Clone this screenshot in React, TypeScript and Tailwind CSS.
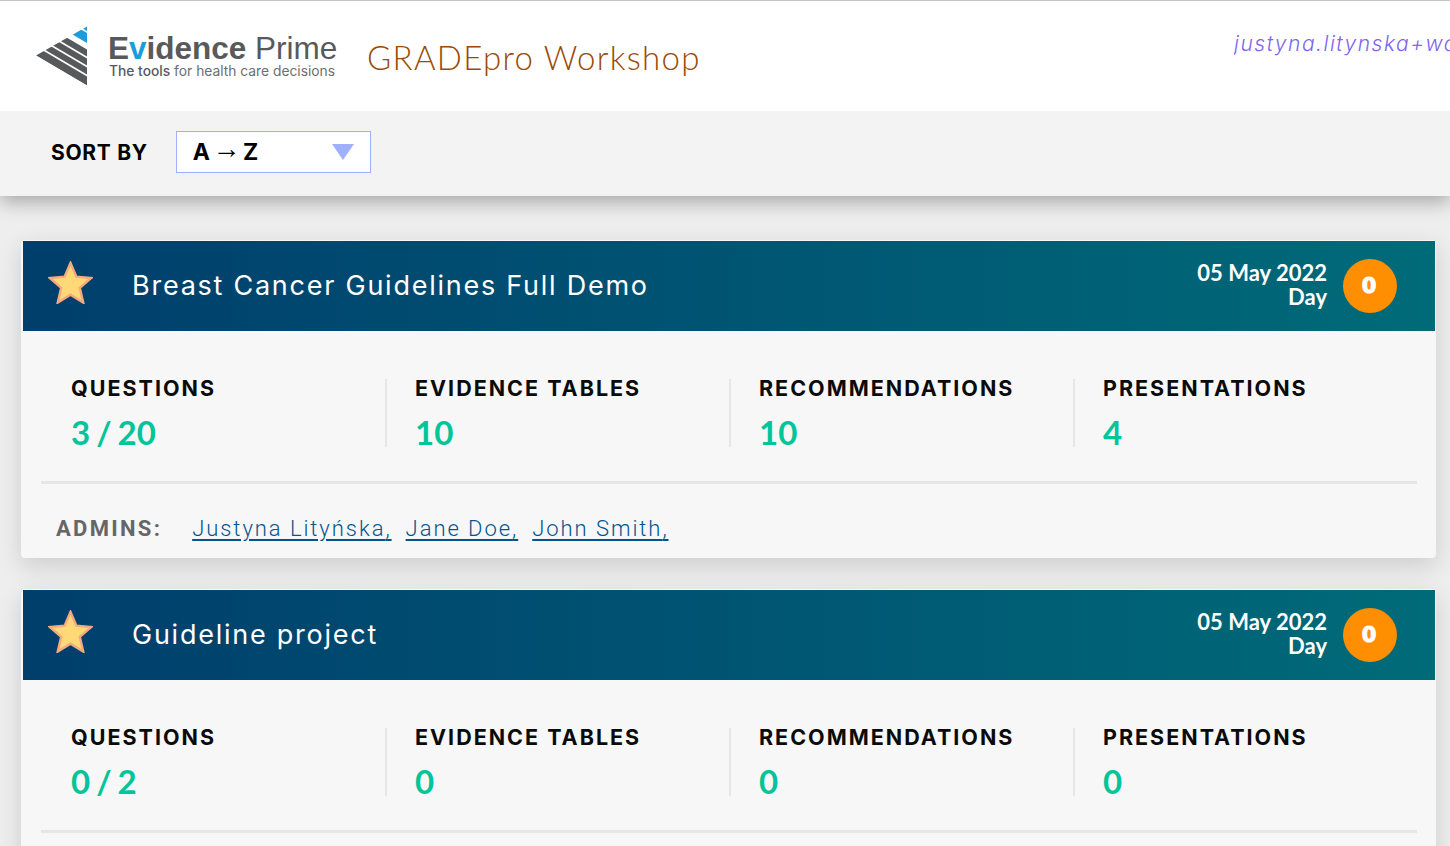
import React from 'react';

const heading = "font-['Inter',sans-serif]";
const lato = "font-['Lato',sans-serif]";

const Logo: React.FC = () => {
  const stripes = [
    { top: 76.5, bottom: 85.5, color: '#58595b' },
    { top: 67.5, bottom: 74.5, color: '#58595b' },
    { top: 58.5, bottom: 65.5, color: '#58595b' },
    { top: 49.5, bottom: 56.5, color: '#58595b' },
    { top: 33, bottom: 43, color: '#1b9cdc' },
    { top: 26, bottom: 31, color: '#1b9cdc' },
  ];
  const dy = 51 * (30 / 51);
  return (
    <svg width="52" height="60" viewBox="36 26 52 60" className="shrink-0">
      <defs>
        <clipPath id="logo-tri">
          <polygon points="36,55.5 87,26.5 87,85.5" />
        </clipPath>
      </defs>
      <g clipPath="url(#logo-tri)">
        {stripes.map((s, i) => (
          <polygon key={i} fill={s.color} points={`87,${s.top} 87,${s.bottom} 36,${s.bottom - dy} 36,${s.top - dy}`} />
        ))}
      </g>
    </svg>
  );
};

const Star: React.FC = () => (
  <svg width="45" height="43" viewBox="0 0 46 44" className="shrink-0">
    <polygon
      points="23,2 29,16 44,17.5 32.5,27.5 36,42.5 23,34.5 10,42.5 13.5,27.5 2,17.5 17,16"
      fill="#ffd976"
      stroke="#f5a97f"
      strokeWidth="2.5"
      strokeLinejoin="miter"
    />
  </svg>
);

type Stat = { label: string; value: string };

const StatCell: React.FC<Stat & { first?: boolean }> = ({ label, value, first }) => (
  <div className={first ? 'w-[344px] pl-[30px]' : 'w-[344px] pl-[28px] border-l-2 border-[#e6e6e6]'}>
    <div className={`${heading} -mt-[1px] text-[21.5px] leading-[20px] font-bold tracking-[2px] text-[#0b0b0b]`}>{label}</div>
    <div className={`${lato} text-[33px] leading-[28px] font-bold text-[#00c49a] mt-[20px] [word-spacing:-2px]`}>{value}</div>
  </div>
);

type Project = { title: string; stats: Stat[]; admins: string[] };

const projects: Project[] = [
  {
    title: 'Breast Cancer Guidelines Full Demo',
    stats: [
      { label: 'QUESTIONS', value: '3 / 20' },
      { label: 'EVIDENCE TABLES', value: '10' },
      { label: 'RECOMMENDATIONS', value: '10' },
      { label: 'PRESENTATIONS', value: '4' },
    ],
    admins: ['Justyna Lityńska', 'Jane Doe', 'John Smith'],
  },
  {
    title: 'Guideline project',
    stats: [
      { label: 'QUESTIONS', value: '0 / 2' },
      { label: 'EVIDENCE TABLES', value: '0' },
      { label: 'RECOMMENDATIONS', value: '0' },
      { label: 'PRESENTATIONS', value: '0' },
    ],
    admins: ['Justyna Lityńska'],
  },
];

const ProjectCard: React.FC<{ project: Project }> = ({ project }) => (
  <div className="w-[1415px] h-[318px] shrink-0 ml-[21px] bg-[#f7f7f7] rounded-[4px] pt-px shadow-[0_8px_24px_rgba(0,0,0,0.14)]">
    <div className="ml-[2px] mr-px h-[90px] flex items-center bg-gradient-to-r from-[#003e6c] to-[#006b78]">
      <div className="ml-[25px] -mt-[8px]"><Star /></div>
      <div className={`${heading} ml-[39px] text-[27px] font-normal tracking-[1.75px] text-white`}>{project.title}</div>
      <div className={`${lato} ml-auto -mt-[3px] text-right text-[22px] leading-[24px] font-bold text-white`}>
        <div>05 May 2022</div>
        <div>Day</div>
      </div>
      <div className="ml-[16px] mr-[38px] w-[54px] h-[54px] rounded-full bg-[#ff8f00] flex items-center justify-center pt-[2px] pr-[2px]">
        <span className="font-['DejaVu_Sans',sans-serif] text-[21px] font-bold text-white [-webkit-text-stroke:1px_white]">0</span>
      </div>
    </div>
    <div className="flex ml-[20px] mr-[19px] mt-[48px] h-[68px]">
      {project.stats.map((s, i) => (
        <StatCell key={s.label} {...s} first={i === 0} />
      ))}
    </div>
    <div className="ml-[20px] mr-[19px] mt-[34px] h-[3px] bg-[#e6e6e6]" />
    <div className="flex items-baseline ml-[35px] mt-[32px] text-[22px] leading-[26px] font-['Roboto',sans-serif]">
      <span className="font-bold tracking-[2.3px] text-[#666666]">ADMINS:</span>
      <div className="flex ml-[30px] gap-[14px]">
        {project.admins.map(a => (
          <a key={a} className="underline underline-offset-[3px] font-light tracking-[1.95px] text-[#03558f]">{a},</a>
        ))}
      </div>
    </div>
  </div>
);

const App: React.FC = () => (
  <div className="w-[1450px] h-[846px] overflow-hidden bg-[#eeeeee] flex flex-col">
    <header className="relative z-20 h-[111px] shrink-0 bg-white border-t border-[#c4c4c4] flex items-start">
      <div className="ml-[36px] mt-[25px]"><Logo /></div>
      <div className="ml-[20px] mt-[29px] w-[240px] font-['Liberation_Sans',sans-serif] text-[#58595b]">
        <div className="text-[31.5px] leading-[36px] whitespace-nowrap">
          <span className="font-bold">E</span><span className="font-bold text-[#1b9cdc]">v</span><span className="font-bold">idence</span> Prime
        </div>
        <div className="font-['Inter',sans-serif] text-[13.8px] leading-[16px] whitespace-nowrap -mt-[3px] ml-[1px] text-[#6d6e70]">
          <span className="font-medium text-[#58595b]">The tools</span> for health care decisions
        </div>
      </div>
      <div className={`${lato} ml-[19px] mt-[35px] text-[33px] leading-[42px] font-light tracking-[1.3px] text-[#9a4a06] whitespace-nowrap`}>
        GRADEpro Workshop
      </div>
      <div className={`${heading} ml-auto mt-[30px] w-[216px] overflow-hidden text-[21px] leading-[26px] italic font-light tracking-[1.5px] text-[#8064ee] whitespace-nowrap`}>
        justyna.litynska+workshop@evidenceprime.pl
      </div>
    </header>
    <div className="relative z-10 h-[85px] shrink-0 bg-[#f3f3f3] flex items-center pl-[51px] pb-[3px] shadow-[0_6px_18px_rgba(0,0,0,0.3)]">
      <span className={`${heading} mt-[2px] text-[21px] font-bold tracking-[0.7px] text-black`}>SORT BY</span>
      <div className="ml-[28px] w-[195px] h-[42px] bg-white border border-[#9fb0ff] flex items-center pl-[16px] pr-[16px]">
        <span className={`${heading} text-[23px] font-bold text-black [word-spacing:-3px]`}>
          A <span className="inline-block -translate-y-[2px] font-['Liberation_Sans',sans-serif] text-[28px] leading-none font-normal">→</span> Z
        </span>
        <svg width="22" height="16" viewBox="0 0 22 16" className="ml-auto">
          <polygon points="0,0 22,0 11,16" fill="#9fb0ff" />
        </svg>
      </div>
    </div>
    <main className="flex flex-col gap-[31px] pt-[44px]">
      {projects.map(p => (
        <ProjectCard key={p.title} project={p} />
      ))}
    </main>
  </div>
);

export default App;
